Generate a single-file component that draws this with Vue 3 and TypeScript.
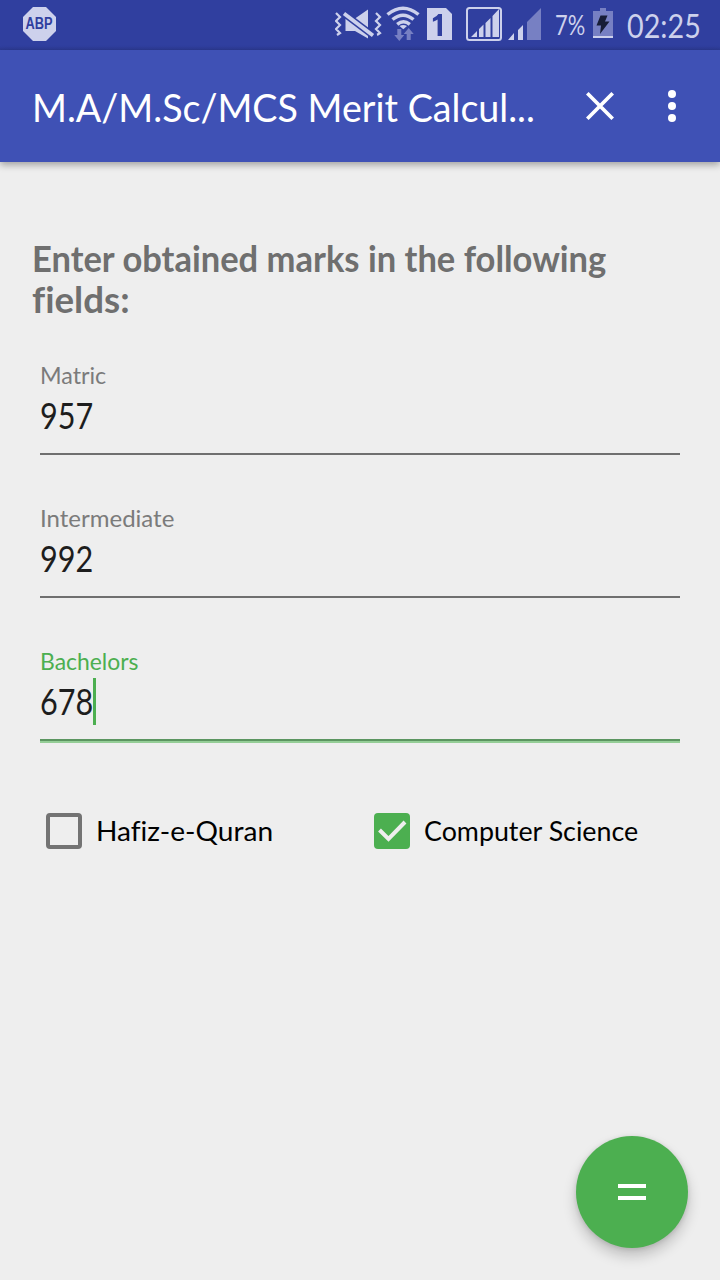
<script setup lang="ts">
import { ref } from 'vue'

interface Field {
  id: string
  label: string
  value: string
}

const fields = ref<Field[]>([
  { id: 'matric', label: 'Matric', value: '957' },
  { id: 'intermediate', label: 'Intermediate', value: '992' },
  { id: 'bachelors', label: 'Bachelors', value: '678' },
])
const focused = ref('bachelors')
const hafiz = ref(false)
const computerScience = ref(true)
</script>

<template>
  <div class="screen">
    <div class="status">
      <svg class="abp" width="34" height="36" viewBox="23 6 34 36">
        <path d="M33 7h13l10 10v14L46 41H33L23 31V17z" fill="#cdd1ec" />
        <text x="25.5" y="29.3" textLength="27" lengthAdjust="spacingAndGlyphs" class="abp-text">ABP</text>
      </svg>
      <svg class="icons" width="208" height="50" viewBox="335 0 208 50">
        <g fill="none" stroke="#cdd1ec" stroke-width="2.200">
          <path d="M336 13l4 4-4 4 4 4-4 4 4 4-3 2M376 13l4 4-4 4 4 4-4 4 4 4-3 2" />
        </g>
        <path d="M345.500 18.500h9.500l13-9v29l-13-7.500h-9.500z" fill="#cdd1ec" />
        <path d="M342 12l33 25" stroke="#303f9f" stroke-width="6.600" />
        <path d="M344 13.500l29 22" stroke="#cdd1ec" stroke-width="3.800" />
        <g fill="none" stroke="#cdd1ec" stroke-width="3.500">
          <path d="M387.500 14.500q15.500-12.500 31 0" />
          <path d="M392.500 19.500q10.500-8.500 21 0" />
          <path d="M397.200 24.300q6.300-5 12.600 0" />
        </g>
        <path d="M399.500 26q3.800-2 7.500 0l-3.700 3.300z" fill="#cdd1ec" />
        <path d="M397.300 29h4v6h3l-5 6-5-6h3zM406.700 40h4v-6h3l-5-6-5 6h3z" fill="#7780c3" />
        <path d="M427 8h19l6 6v26h-25z" fill="#cdd1ec" />
        <path d="M442 14v22h-4.400V19.500q-2 1.500-4.700 2.300v-3.500q3.800-1.600 5.500-4.300z" fill="#303f9f" />
        <rect x="467" y="8" width="34" height="32" rx="2.500" fill="none" stroke="#cdd1ec" stroke-width="2" />
        <path d="M471 37l6-6v6zM479 37v-8l4.500-4.500V37zM485.500 37V23l5-5v19zM492.500 37V16l6.500-7v28z" fill="#cdd1ec" />
        <path d="M508 40l6-7v7zM518 40V30l5-5v15z" fill="#cdd1ec" />
        <path d="M527 40V22l14-14v32z" fill="#7780c3" />
      </svg>
      <span class="battery-text"><span class="fit">7%</span></span>
      <svg class="battery" width="20" height="50" viewBox="593 0 20 50">
        <path d="M593 11h7V8h6v3h7v25h-20z" fill="#7780c3" />
        <path d="M593 36h20v2h-20z" fill="#cdd1ec" />
        <path d="M600.500 15.500h7l-2.500 6h4.500l-9.500 12.500 1-8.500h-4.500z" fill="#171d37" />
      </svg>
      <span class="clock"><span class="fit">02:25</span></span>
    </div>

    <header class="appbar">
      <h1 class="title"><span class="fit">M.A/M.Sc/MCS Merit Calcul...</span></h1>
      <svg class="close" width="28" height="28" viewBox="0 0 28 28">
        <path d="M1.300 1.300l25.400 25.400M26.700 1.300L1.300 26.700" stroke="#fff" stroke-width="3.700" />
      </svg>
      <svg class="more" width="8" height="34" viewBox="0 0 8 34" fill="#fff">
        <circle cx="4" cy="5" r="4" />
        <circle cx="4" cy="17" r="4" />
        <circle cx="4" cy="29" r="4" />
      </svg>
    </header>

    <main class="content">
      <h2 class="heading">
        <span class="fit line-a">Enter obtained marks in the following</span>
        <span class="fit line-b">fields:</span>
      </h2>

      <div
        v-for="f in fields"
        :key="f.id"
        class="field"
        :class="[f.id, { focused: f.id === focused }]"
        @click="focused = f.id"
      >
        <div class="label"><span class="fit">{{ f.label }}</span></div>
        <div class="value"><span class="digits"><span class="fit">{{ f.value }}</span></span><i v-if="f.id === focused" class="caret"></i></div>
        <div class="underline"></div>
      </div>

      <div class="checks">
        <div class="check first" @click="hafiz = !hafiz">
          <span class="box" :class="{ on: hafiz }">
            <svg v-if="hafiz" width="36" height="36" viewBox="0 0 36 36"><path d="M5.500 17l9 9L31 9" /></svg>
          </span>
          <span class="fit">Hafiz-e-Quran</span>
        </div>
        <div class="check second" @click="computerScience = !computerScience">
          <span class="box" :class="{ on: computerScience }">
            <svg v-if="computerScience" width="36" height="36" viewBox="0 0 36 36"><path d="M5.500 17l9 9L31 9" /></svg>
          </span>
          <span class="fit">Computer Science</span>
        </div>
      </div>
    </main>

    <button class="fab" aria-label="Calculate">
      <svg width="28" height="16" viewBox="0 0 28 16" fill="#fff">
        <rect width="28" height="4" />
        <rect y="12" width="28" height="4" />
      </svg>
    </button>
  </div>
</template>

<style>
body {
  margin: 0;
  background: #eeeeee;
}
</style>

<style scoped>
.screen {
  position: relative;
  width: 720px;
  height: 1280px;
  overflow: hidden;
  background: #eeeeee;
  font-family: Lato, "Open Sans", sans-serif;
  font-variant-ligatures: none;
}
.fit {
  display: inline-block;
  white-space: pre;
  transform-origin: 0 50%;
}
.status {
  display: flex;
  align-items: center;
  height: 50px;
  background: linear-gradient(#303f9f 46px, #2c3a93);
  color: #cdd1ec;
}
.abp {
  margin: -2px 0 0 23px;
  overflow: visible;
}
.abp-text {
  font: 900 16px "Liberation Sans", sans-serif;
  fill: #303f9f;
}
.icons {
  margin-left: 278px;
}
.battery-text {
  width: 38px;
  margin-left: 12px;
  font-size: 26px;
  line-height: 54px;
}
.battery-text .fit {
  transform: scaleX(0.84);
}
.clock {
  width: 80px;
  margin-left: 14px;
  font-size: 33px;
  line-height: 54px;
}
.clock .fit {
  transform: scaleX(0.87);
}
.appbar {
  position: relative;
  display: flex;
  align-items: center;
  height: 112px;
  background: #3f51b5;
  box-shadow: 0 3px 7px rgba(0, 0, 0, 0.32);
}
.title {
  width: 520px;
  margin: 1px 0 0 32px;
  color: #fff;
  font-size: 39px;
  font-weight: 400;
  line-height: 50px;
}
.title .fit {
  transform: scaleX(0.965);
}
.close {
  margin-left: 34px;
}
.more {
  margin-left: 54px;
}
.content {
  padding: 76px 40px 0;
}
.heading {
  display: flex;
  flex-direction: column;
  align-items: flex-start;
  margin: 0 0 0 -8px;
  color: #6f6f6f;
  font-size: 36px;
  font-weight: 700;
  line-height: 41px;
}
.line-a {
  transform: scaleX(0.959);
}
.line-b {
  transform: scaleX(1.02);
}
.field {
  display: flex;
  flex-direction: column;
  height: 143px;
}
.heading + .field {
  margin-top: 39px;
}
.label {
  height: 32px;
  color: #7b7b7b;
  font-size: 24px;
  line-height: 32px;
}
.matric .fit {
  transform: scaleX(0.97);
}
.bachelors .fit {
  transform: scaleX(0.955);
}
.focused .label {
  color: #4caf50;
}
.value {
  display: flex;
  align-items: center;
  height: 48px;
  color: #1d1d1d;
  font-size: 36px;
  line-height: 50px;
}
.digits {
  width: 53px;
}
.value .digits .fit {
  transform: scaleX(0.85);
}
.caret {
  width: 3px;
  height: 47px;
  background: #4caf50;
}
.underline {
  height: 2px;
  margin-top: 14px;
  background: #6f6f6f;
}
.focused .underline {
  height: 4px;
  background: linear-gradient(#5b9560 2px, #94cd96 2px);
}
.checks {
  display: flex;
  height: 36px;
  margin-top: 25px;
}
.check {
  display: flex;
  flex: none;
  align-items: center;
  width: 328px;
  margin-left: 6px;
  color: #000;
  font-size: 27px;
  line-height: 36px;
}
.check.first .fit {
  transform: scaleX(1.04);
}
.check.second {
  width: 290px;
  margin-left: 0;
}
.check.second .fit {
  transform: scaleX(0.993);
}
.box {
  box-sizing: border-box;
  flex: none;
  width: 36px;
  height: 36px;
  margin-right: 14px;
  border: 4px solid #737373;
  border-radius: 4px;
}
.box.on {
  border: 0;
  background: #4caf50;
}
.box svg {
  display: block;
  fill: none;
  stroke: #eeeeee;
  stroke-width: 4;
}
.fab {
  position: absolute;
  right: 32px;
  bottom: 32px;
  display: flex;
  align-items: center;
  justify-content: center;
  width: 112px;
  height: 112px;
  padding: 0;
  border: 0;
  border-radius: 50%;
  background: #4caf50;
  box-shadow: 0 8px 14px rgba(0, 0, 0, 0.2), 0 1px 5px rgba(0, 0, 0, 0.12);
}
</style>
